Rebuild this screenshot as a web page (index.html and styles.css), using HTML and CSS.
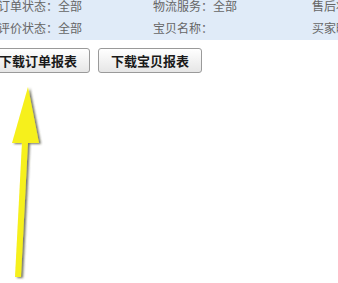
FILE: index.html
```html
<!DOCTYPE html>
<html>

<head>
    <title>Orders</title>
    <link rel="stylesheet" href="styles.css">
</head>

<body>
    <div class="filter">
        <div class="row">
            <span>订单状态：全部</span>
            <span>物流服务：全部</span>
            <span>售后状态：全部</span>
        </div>
        <div class="row">
            <span>评价状态：全部</span>
            <span>宝贝名称：</span>
            <span>买家昵称：</span>
        </div>
    </div>
    <div class="actions">
        <button class="btn">下载订单报表</button>
        <button class="btn">下载宝贝报表</button>
    </div>

    <svg class="arrow" width="60" height="200" viewBox="0 0 60 200">
        <defs>
            <filter id="shade" x="-30%" y="-10%" width="160%" height="120%">
                <feDropShadow dx="2" dy="1" stdDeviation="1.2" flood-color="#3a3a20" flood-opacity="0.7" />
            </filter>
        </defs>
        <g filter="url(#shade)">
            <polygon points="28,7 12,63 39,63" fill="#f6f01c" />
            <polygon points="22,62 28,62 21,197 15,197" fill="#f6f01c" />
        </g>
    </svg>
</body>

</html>
```

FILE: styles.css
```css
body {
    margin: 0;
    font-family: "Noto Sans CJK SC", "DejaVu Sans", sans-serif;
    font-size: 12px;
    color: #666666;
    background: #ffffff;
    overflow: hidden;
}

.filter {
    background: #e0ebf8;
    margin-top: -5px;
    padding-bottom: 1px;
}

.row {
    display: grid;
    grid-template-columns: 155px 159px auto;
    margin-left: -2px;
    height: 22px;
    line-height: 22px;
    white-space: nowrap;
}

.actions {
    display: flex;
    gap: 8px;
    margin: 8px 0 0 -14px;
}

.btn {
    width: 104px;
    height: 25px;
    padding: 0;
    font-family: inherit;
    font-size: 13px;
    font-weight: bold;
    color: #1a1a1a;
    background: linear-gradient(#ffffff, #e6e6e6);
    border: 1px solid #9a9a9a;
    border-radius: 3px;
}

.arrow {
    position: absolute;
    left: 0;
    top: 80px;
}
```
